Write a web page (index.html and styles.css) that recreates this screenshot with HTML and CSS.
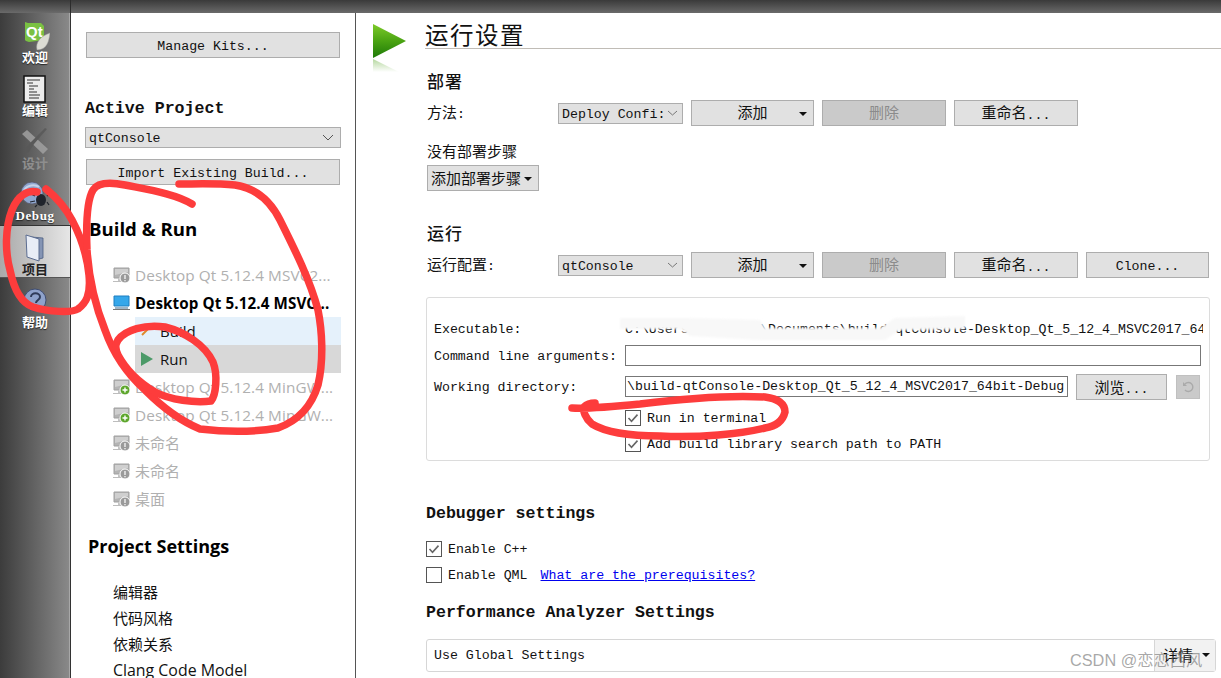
FILE: index.html
```html
<!DOCTYPE html>
<html lang="zh">
<head>
<meta charset="utf-8">
<title>运行设置</title>
<link rel="stylesheet" href="styles.css">
</head>
<body>
<svg class="defs" width="0" height="0" aria-hidden="true">
  <symbol id="mon" viewBox="0 0 18 18">
    <path d="M1 2h15v10H1z" fill="#b4b4b4" stroke="#a0a0a0"/>
    <path d="M2 3h13v3L2 9z" fill="#cfcfcf"/>
    <path d="M0 15h13v1H0z" fill="#bdbdbd"/>
    <path d="M5 12h6v3H5z" fill="#c4c4c4"/>
  </symbol>
  <symbol id="warn" viewBox="0 0 18 18">
    <use href="#mon"/>
    <circle cx="12" cy="12" r="5" fill="#9a9a9a" stroke="#fff"/>
    <path d="M11.4 9h1.2v4h-1.2zM11.4 14h1.2v1.2h-1.2z" fill="#fff"/>
  </symbol>
  <symbol id="add" viewBox="0 0 18 18">
    <use href="#mon"/>
    <circle cx="12" cy="12" r="5" fill="#5da62c" stroke="#fff"/>
    <path d="M11.3 9.500h1.400v1.800h1.800v1.400h-1.800v1.800h-1.400v-1.800H9.500v-1.400h1.800z" fill="#fff"/>
  </symbol>
  <symbol id="tick" viewBox="0 0 16 16">
    <path d="M3.500 8l3 3.200 6-6.600" fill="none" stroke="#666" stroke-width="1.600"/>
  </symbol>
</svg>

<div class="topbar"><span class="topbar-left"></span></div>

<div class="window">
  <nav class="rail">
    <a class="rail-item">
      <svg class="rail-icon" width="30" height="28" viewBox="0 0 30 28">
        <path d="M5 0l3 1h13l3 3v14l-15 2-3-1-1-1z" fill="#7ac143"/>
        <text x="6" y="15" class="qt-mark">Qt</text>
        <path d="M17 28c-2-8 4-14 13-17-1 8-3 17-13 17z" fill="#dcdcd4" stroke="#999" stroke-width=".5"/>
      </svg>
      <span class="rail-label">欢迎</span>
    </a>
    <a class="rail-item">
      <svg class="rail-icon" width="24" height="28" viewBox="0 0 24 28">
        <rect x="1" y="1" width="21" height="26" fill="#ececec" stroke="#111" stroke-width="1.500"/>
        <path d="M4 5h13M4 8h6M6 11h9M6 14h5M6 17h8M6 20h11M6 23h10" stroke="#333" stroke-width="1"/>
      </svg>
      <span class="rail-label">编辑</span>
    </a>
    <a class="rail-item rail-off">
      <svg class="rail-icon" width="28" height="28" viewBox="0 0 28 28">
        <path d="M1 6l5-4 21 19-5 5z" fill="#a4a4a4"/>
        <path d="M26 1L13 16l-5 8-4 2 0-5 5-6L24 0z" fill="#585858"/>
      </svg>
      <span class="rail-label">设计</span>
    </a>
    <a class="rail-item">
      <svg class="rail-icon" width="30" height="26" viewBox="0 0 30 26">
        <circle cx="12" cy="11" r="11" fill="#8fa7cf" stroke="#556" stroke-width=".8"/>
        <path d="M4 8c3-5 11-6 15-3" stroke="#c6d3ea" stroke-width="2" fill="none"/>
        <ellipse cx="21" cy="18" rx="5" ry="6" fill="#20242c"/>
        <path d="M15 14l-4-2M15 19l-5 1M27 14l2-2M27 20l2 3M17 23l-2 2" stroke="#20242c" stroke-width="1.200"/>
      </svg>
      <span class="rail-label rail-latin">Debug</span>
    </a>
    <a class="rail-item rail-active">
      <svg class="rail-icon" width="20" height="28" viewBox="0 0 20 28">
        <path d="M6 3l12 1v20l-4 1z" fill="#8494b4" stroke="#4d5e80" stroke-width=".8"/>
        <path d="M1 1l13 4v22L2 23z" fill="#e8edf6" stroke="#5b6c90"/>
      </svg>
      <span class="rail-label">项目</span>
    </a>
    <a class="rail-item">
      <svg class="rail-icon" width="24" height="26" viewBox="0 0 24 26">
        <circle cx="12" cy="12" r="11" fill="#8ea2cb" stroke="#3f4d70"/>
        <path d="M8 9c0-5 9-5 9 0 0 3-4 3-4 6" fill="none" stroke="#2f3b58" stroke-width="2"/>
        <circle cx="13" cy="18" r="1.400" fill="#2f3b58"/>
      </svg>
      <span class="rail-label">帮助</span>
    </a>
  </nav>

  <aside class="panel">
    <button class="btn panel-btn mono">Manage Kits...</button>
    <h2 class="mono-head active-head">Active Project</h2>
    <div class="combo panel-combo mono">qtConsole<svg class="chev" width="12" height="7" viewBox="0 0 12 7"><path d="M1 1l5 5 5-5" fill="none" stroke="#555"/></svg></div>
    <button class="btn panel-btn import mono">Import Existing Build...</button>
    <h2 class="sans-head build-head">Build &amp; Run</h2>
    <ul class="kits">
      <li class="kit off en"><svg class="kit-icon" width="18" height="18"><use href="#warn"/></svg><span class="kit-label">Desktop Qt 5.12.4 MSVC2...</span></li>
      <li class="kit current en"><svg class="kit-icon" width="18" height="18" viewBox="0 0 18 18"><path d="M1 2h15v10H1z" fill="#35a7ea" stroke="#1f7fc0"/><path d="M2 13h13v2H2z" fill="#9fb5c6"/><path d="M0 15.500h17" stroke="#777"/></svg><span class="kit-label">Desktop Qt 5.12.4 MSVC...</span></li>
      <li class="kit sub build"><span class="kit-label"><svg class="sub-icon" width="12" height="12" viewBox="0 0 12 12"><path d="M1 10l7-7" stroke="#e08a2a" stroke-width="2"/></svg>Build</span></li>
      <li class="kit sub run"><span class="kit-label"><svg class="sub-icon" width="12" height="14" viewBox="0 0 12 14"><path d="M0 0l12 7-12 7z" fill="#4c9a68"/></svg>Run</span></li>
      <li class="kit off en"><svg class="kit-icon" width="18" height="18"><use href="#add"/></svg><span class="kit-label">Desktop Qt 5.12.4 MinGW...</span></li>
      <li class="kit off en"><svg class="kit-icon" width="18" height="18"><use href="#add"/></svg><span class="kit-label">Desktop Qt 5.12.4 MinGW...</span></li>
      <li class="kit off"><svg class="kit-icon" width="18" height="18"><use href="#warn"/></svg><span class="kit-label">未命名</span></li>
      <li class="kit off"><svg class="kit-icon" width="18" height="18"><use href="#warn"/></svg><span class="kit-label">未命名</span></li>
      <li class="kit off"><svg class="kit-icon" width="18" height="18"><use href="#warn"/></svg><span class="kit-label">桌面</span></li>
    </ul>
    <h2 class="sans-head settings-head">Project Settings</h2>
    <ul class="settings">
      <li>编辑器</li>
      <li>代码风格</li>
      <li>依赖关系</li>
      <li class="en">Clang Code Model</li>
    </ul>
  </aside>

  <main class="main">
    <svg class="run-mark" width="34" height="50" viewBox="0 0 34 50">
      <defs>
        <linearGradient id="g1" x1="0" y1="0" x2="0" y2="1"><stop offset="0" stop-color="#7ecb2a"/><stop offset=".5" stop-color="#4aa312"/><stop offset="1" stop-color="#1e7a08"/></linearGradient>
        <linearGradient id="g2" x1="0" y1="0" x2="0" y2="1"><stop offset="0" stop-color="#b6d8a0"/><stop offset="1" stop-color="#fff"/></linearGradient>
      </defs>
      <path d="M0 0l33 17L0 34z" fill="url(#g1)"/>
      <path d="M0 35l26 13H0z" fill="url(#g2)"/>
    </svg>
    <div class="body">
      <h1 class="title">运行设置</h1>

      <h3 class="section deploy"><span class="zh">部署</span></h3>
      <div class="row mono first-row">
        <label class="row-label"><span class="zh">方法</span>:</label>
        <div class="combo row-combo">Deploy Confi:<svg class="chev" width="11" height="6" viewBox="0 0 11 6"><path d="M1 1l4.500 4 4.500-4" fill="none" stroke="#777"/></svg></div>
        <button class="btn w-add mono"><span class="zh">添加</span><i class="caret"></i></button>
        <button class="btn off w-del mono"><span class="zh">删除</span></button>
        <button class="btn w-del mono"><span class="zh">重命名</span>...</button>
      </div>
      <p class="note">没有部署步骤</p>
      <button class="btn step-btn"><span class="zh">添加部署步骤</span><i class="caret inline"></i></button>

      <h3 class="section runhead"><span class="zh">运行</span></h3>
      <div class="row mono first-row">
        <label class="row-label"><span class="zh">运行配置</span>:</label>
        <div class="combo row-combo">qtConsole<svg class="chev" width="11" height="6" viewBox="0 0 11 6"><path d="M1 1l4.500 4 4.500-4" fill="none" stroke="#777"/></svg></div>
        <button class="btn w-add mono"><span class="zh">添加</span><i class="caret"></i></button>
        <button class="btn off w-del mono"><span class="zh">删除</span></button>
        <button class="btn w-del mono"><span class="zh">重命名</span>...</button>
        <button class="btn w-add mono">Clone...</button>
      </div>

      <section class="group mono">
        <div class="g-row g-exec"><span class="g-label">Executable:</span><span class="g-value">C:\Users\XXXXXXX7\Documents\build-qtConsole-Desktop_Qt_5_12_4_MSVC2017_64bit-Debug</span></div>
        <div class="g-row g-args"><span class="g-label">Command line arguments:</span><span class="field wide"></span></div>
        <div class="g-row g-work"><span class="g-label">Working directory:</span><span class="field path">\build-qtConsole-Desktop_Qt_5_12_4_MSVC2017_64bit-Debug</span><button class="btn browse mono"><span class="zh">浏览</span>...</button><button class="btn off revert"><svg width="12" height="12" viewBox="0 0 12 12"><path d="M3 3a4.500 4.500 0 1 1 0 6" fill="none" stroke="#aaa" stroke-width="1.400"/><path d="M1 1v4h4z" fill="#aaa"/></svg></button></div>
        <div class="g-row g-check g-term"><span class="g-label"></span><span class="check"><svg width="16" height="16"><use href="#tick"/></svg></span>Run in terminal</div>
        <div class="g-row g-check g-lib"><span class="g-label"></span><span class="check"><svg width="16" height="16"><use href="#tick"/></svg></span>Add build library search path to PATH</div>
      </section>

      <h3 class="mono-head debug-head">Debugger settings</h3>
      <div class="check-row mono cpp"><span class="check"><svg width="16" height="16"><use href="#tick"/></svg></span>Enable C++</div>
      <div class="check-row mono qml"><span class="check"></span>Enable QML<a class="link">What are the prerequisites?</a></div>
      <h3 class="mono-head perf-head">Performance Analyzer Settings</h3>
      <div class="global mono">Use Global Settings<button class="detail"><span class="zh">详情</span><i class="caret"></i></button></div>
    </div>
  </main>
</div>

<div class="watermark">CSDN @恋恋西风</div>

<svg class="ink" width="1221" height="678" viewBox="0 0 1221 678" aria-hidden="true">
  <defs><filter id="soft" x="-10%" y="-60%" width="120%" height="220%"><feGaussianBlur stdDeviation="1"/></filter></defs>
  <path d="M620 318L690 318L760 320L765 328L880 328L895 318L965 316L965 329L900 330L885 340L760 340L690 336L680 329L620 329Z" fill="#f8f8f8" filter="url(#soft)"/>
  <g fill="none" stroke="#fd3c3c" stroke-width="7.500" stroke-linecap="round" stroke-linejoin="round">
    <path d="M37 192C28 190 18 195 12 210C5 228 5 252 10 270C14 290 22 303 33 307C48 312 72 313 78 309C86 303 91 295 89 275C87 255 80 235 72 220C64 205 56 197 46 189"/>
    <path d="M192 204C176 194 150 190 125 185C110 182 98 182 93 190C87 200 86 225 87 250C89 280 95 305 105 330C112 350 125 372 145 390C160 405 178 420 200 429C225 432 255 432 278 428C300 420 312 405 318 385C324 360 322 330 318 310C310 280 295 250 280 220C270 200 255 188 235 185C215 183 195 184 179 184"/>
    <path d="M118 340C125 330 145 324 165 327C185 332 205 345 213 362C218 375 216 395 211 401C195 403 170 400 155 392C138 382 125 368 118 355C115 348 115 345 118 340"/>
    <path d="M572 408C590 409 610 407 640 404C680 399 730 395 765 397C780 399 785 405 785 412C783 420 778 426 765 428C740 434 700 438 660 436C630 436 605 432 592 424C585 418 583 411 584 407C587 404 592 403 595 403"/>
  </g>
</svg>
</body>
</html>
```

FILE: styles.css
```css
* { box-sizing: border-box; }
html, body { margin: 0; padding: 0; height: 678px; overflow: hidden; background: #fff; }
body { font-family: "Liberation Mono", "Noto Sans CJK SC", monospace; font-size: 13.25px; color: #111; position: relative; }
ul { list-style: none; margin: 0; padding: 0; }
h1, h2, h3, p { margin: 0; }
button { font: inherit; color: inherit; padding: 0; }
.defs { position: absolute; }

.mono { font-family: "Liberation Mono", "Noto Sans CJK SC", monospace; font-size: 13.25px; }
.zh { display: inline-block; font-family: "Noto Sans CJK SC", sans-serif; font-size: 15px; line-height: 16px; }
.row .btn .zh { transform: translateY(-1px); }

.topbar { height: 13px; background: linear-gradient(#3a3a3a, #6a6a6a); }
.topbar-left { display: block; width: 71px; height: 13px; border-right: 1px solid #2c2c2c; }

.window { display: grid; grid-template-columns: 71px 285px 1fr; height: 665px; }

/* Left rail */
.rail { background: linear-gradient(90deg, #3c3c3c, #8a8a8a); border-right: 1px solid #333; box-shadow: inset -1px 0 0 #a8a8a8; display: flex; flex-direction: column; }
.rail-item { height: 53px; display: flex; flex-direction: column; align-items: center; padding-top: 9px; position: relative; }
.rail-icon { height: 28px; flex: none; }
.rail-label { font-family: "Noto Sans CJK SC", sans-serif; font-size: 13px; font-weight: 700; line-height: 14px; color: #fff; margin-top: 0; text-shadow: 0 1px 1px #222; }
.rail-latin { font-family: "Liberation Serif", serif; font-size: 13px; letter-spacing: .6px; }
.rail-off .rail-icon { opacity: .8; }
.rail-off .rail-label { color: #8e8e8e; text-shadow: none; }
.rail-active { background: linear-gradient(90deg, #a9a9a9, #e6e6e6); border-top: 1px solid #333; border-bottom: 1px solid #555; padding-top: 8px; }
.rail-active .rail-label { color: #222; text-shadow: none; }
.qt-mark { font-family: "Liberation Sans", sans-serif; font-size: 15px; font-weight: 700; fill: #fff; }

/* Project panel */
.panel { border-right: 1px solid #555; padding: 19px 0 0 15px; overflow: hidden; }
.btn { display: block; background: #e1e1e1; border: 1px solid #adadad; text-align: center; height: 26px; padding-top: 2px; position: relative; }
.btn.off { background: #cacaca; color: #8b8b8b; }
.btn.off .zh { color: #8b8b8b; }
.panel-btn { width: 254px; }
.import { margin-top: 11px; }
.mono-head { font-family: "Liberation Mono", "Noto Sans CJK SC", monospace; font-weight: 700; font-size: 16.6px; line-height: 22px; height: 20px; color: #111; }
.active-head { margin: 40px 0 0 -1px; }
.combo { background: #e1e1e1; border: 1px solid #adadad; height: 21px; line-height: 21px; padding-left: 3px; position: relative; white-space: nowrap; overflow: hidden; }
.panel-combo { width: 256px; margin: 9px 0 0 -1px; }
.chev { position: absolute; right: 4px; top: 6px; background: #e1e1e1; }
.panel-combo .chev { right: 6px; top: 6px; }
.sans-head { font-family: "Open Sans", "Noto Sans", sans-serif; font-weight: 700; line-height: 24px; color: #000; }
.build-head { margin: 32px 0 0 3px; font-size: 18.6px; }
.kits { margin: 20px 0 0 27px; font-family: "Open Sans", "Noto Sans CJK SC", sans-serif; font-size: 15px; }
.kit { height: 28px; line-height: 28px; display: flex; align-items: center; white-space: nowrap; }
.kit.en { font-size: 15.3px; letter-spacing: .1px; }
.kit-icon { width: 18px; height: 18px; flex: none; margin-right: 4px; }
.kit.off { color: #b0b0b0; }
.kit.current { font-weight: 700; color: #000; font-size: 15.2px; }
.kit.sub .kit-label { display: flex; align-items: center; width: 206px; height: 28px; margin-left: 22px; color: #111; }
.kit.build .kit-label { background: #e5f1fb; }
.kit.run .kit-label { background: #d8d8d8; }
.sub-icon { margin: 0 7px 0 6px; flex: none; width: 12px; }
.settings-head { margin: 21px 0 0 2px; font-size: 18px; }
.settings { margin: 21px 0 0 27px; font-family: "Open Sans", "Noto Sans CJK SC", sans-serif; font-size: 15px; color: #111; }
.settings li { height: 26px; line-height: 26px; }
.settings .en { font-size: 15.9px; white-space: nowrap; }

/* Main */
.main { display: flex; padding-left: 17px; overflow: hidden; }
.run-mark { flex: none; margin: 11px 18px 0 0; width: 34px; }
.body { flex: 1; min-width: 0; }
.title { height: 36px; font-family: "Noto Sans CJK SC", sans-serif; font-size: 23.5px; font-weight: 400; line-height: 26px; padding-top: 8px; letter-spacing: 1.500px; border-bottom: 1px solid #c0bcb6; }
.section { height: 20px; line-height: 20px; margin: 23px 0 0 2px; font-weight: 700; }
.section .zh { font-size: 17px; line-height: 20px; letter-spacing: 1px; font-weight: 500; transform: translateY(-1px); }
.runhead { margin-top: 33px; }
.row { display: flex; align-items: center; gap: 8px; height: 26px; margin-top: 8px; }
.row-label { width: 123px; margin-left: 2px; flex: none; }
.row-combo { width: 125px; flex: none; }
.w-add { width: 123px; flex: none; }
.w-del { width: 124px; flex: none; }
.caret { position: absolute; right: 6px; top: 11px; width: 0; height: 0; border: 4px solid transparent; border-top-color: #111; border-bottom: 0; }
.caret.inline { right: 6px; }
.note { margin: 16px 0 0 2px; height: 20px; line-height: 18px; font-family: "Noto Sans CJK SC", sans-serif; font-size: 15px; }
.step-btn { width: 112px; margin: 3px 0 0 2px; text-align: left; padding: 2px 0 0 3px; white-space: nowrap; }

.group { margin: 19px 0 0 1px; width: 784px; height: 164px; border: 1px solid #dcdcdc; border-radius: 3px; padding: 22px 0 0 7px; overflow: hidden; }
.g-row { display: flex; align-items: center; white-space: nowrap; }
.g-label { width: 191px; flex: none; }
.g-exec { height: 18px; }
.g-value { width: 578px; overflow: hidden; flex: none; }
.g-args { height: 21px; margin-top: 7px; }
.g-args .g-label, .g-work .g-label { padding-top: 2px; }
.g-work { height: 21px; margin-top: 10px; }
.field { display: block; height: 21px; line-height: 20px; border: 1px solid #777; background: #fff; flex: none; overflow: hidden; }
.wide { width: 576px; }
.path { width: 443px; padding-left: 1px; }
.browse { width: 91px; margin-left: 8px; flex: none; }
.revert { width: 24px; height: 24px; margin-left: 9px; padding: 0; flex: none; display: flex; align-items: center; justify-content: center; border-color: #c0c0c0; }
.g-check { height: 16px; }
.g-term { margin-top: 13px; }
.g-lib { margin-top: 10px; }
.check { width: 16px; height: 16px; border: 1px solid #555; background: #fff; flex: none; margin-right: 6px; display: block; }
.check svg { display: block; margin: -1px; }

.debug-head { margin: 42px 0 0 1px; }
.check-row { display: flex; align-items: center; height: 16px; margin-left: 1px; }
.cpp { margin-top: 18px; }
.qml { margin-top: 10px; }
.link { margin-left: 13px; color: #0000ee; text-decoration: underline; }
.perf-head { margin: 19px 0 0 1px; }
.global { margin: 17px 0 0 1px; width: 790px; height: 33px; border: 1px solid #d6d6d6; border-radius: 3px; padding-left: 7px; line-height: 32px; position: relative; }
.detail { position: absolute; right: 0; top: 0; width: 61px; height: 31px; border: 0; border-left: 1px solid #d6d6d6; background: #f2f2f2; text-align: left; padding: 3px 0 0 8px; line-height: 30px; }
.detail .caret { top: 13px; right: 5px; }

/* Overlays: screenshot watermark and hand-drawn annotation */
.watermark { position: absolute; left: 1070px; top: 650px; font-family: "Liberation Sans", "Noto Sans CJK SC", sans-serif; font-size: 16.300px; line-height: 20px; color: rgba(110, 110, 110, .6); white-space: nowrap; }
.ink { position: absolute; left: 0; top: 0; pointer-events: none; }
```
